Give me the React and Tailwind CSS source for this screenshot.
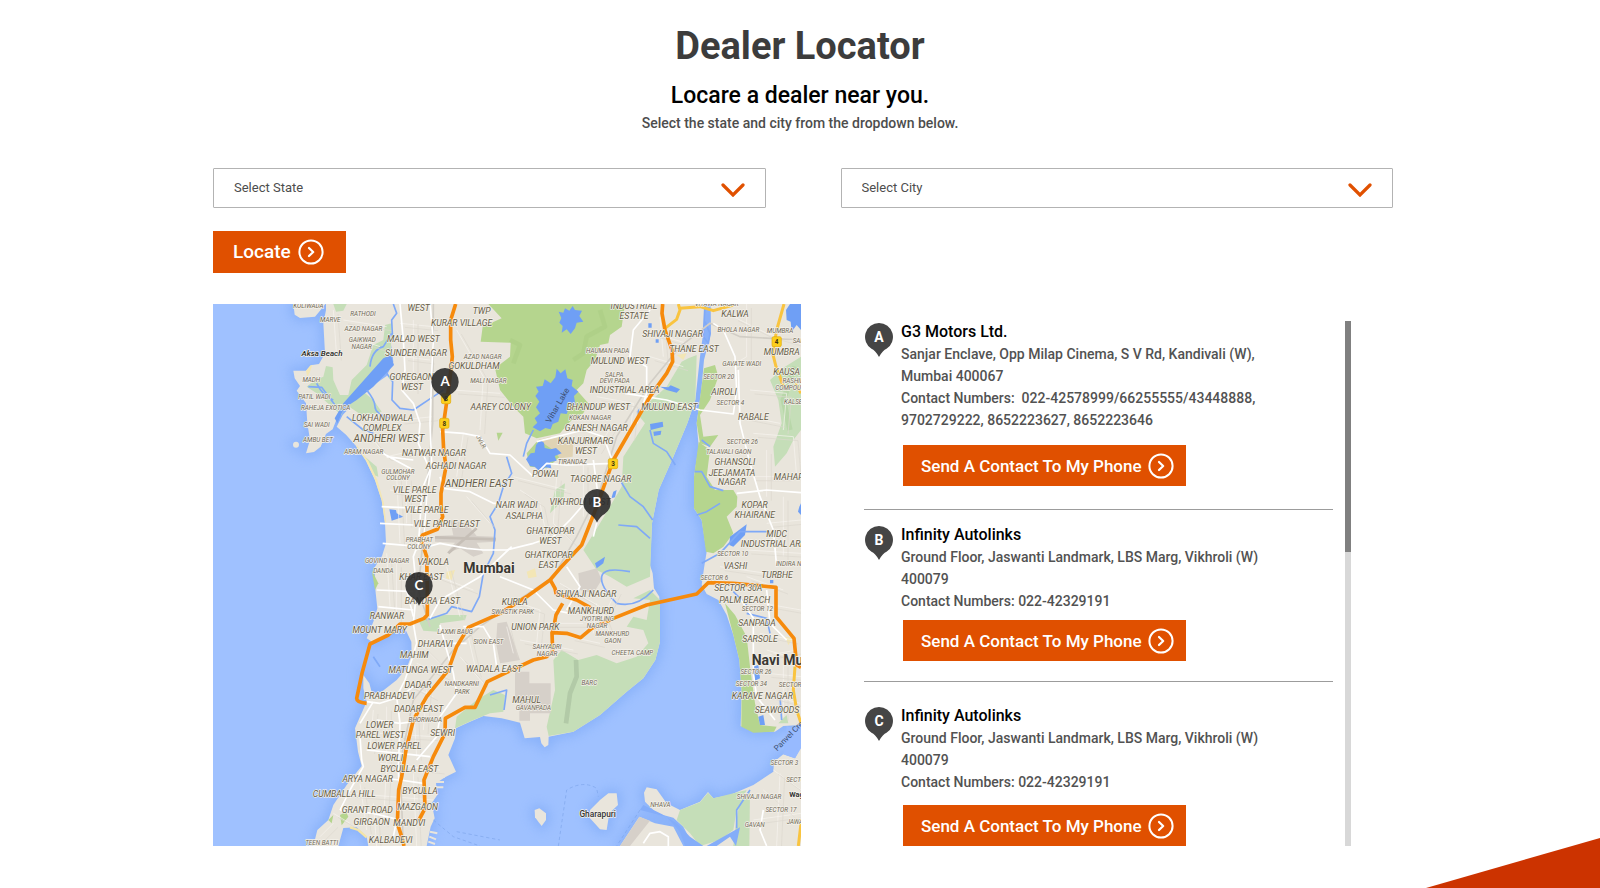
import React from "react";

const dealers = [
  {
    id: "A",
    name: "G3 Motors Ltd.",
    lines: [
      "Sanjar Enclave, Opp Milap Cinema, S V Rd, Kandivali (W),",
      "Mumbai 400067",
      "Contact Numbers:\u00a0 022-42578999/66255555/43448888,",
      "9702729222, 8652223627, 8652223646",
    ],
    item: "pb-[23px]",
    action: "mt-3.5",
  },
  {
    id: "B",
    name: "Infinity Autolinks",
    lines: [
      "Ground Floor, Jaswanti Landmark, LBS Marg, Vikhroli (W)",
      "400079",
      "Contact Numbers: 022-42329191",
    ],
    item: "border-t border-[#9c9c9c] pt-3.5 pb-5",
    action: "mt-2",
  },
  {
    id: "C",
    name: "Infinity Autolinks",
    lines: [
      "Ground Floor, Jaswanti Landmark, LBS Marg, Vikhroli (W)",
      "400079",
      "Contact Numbers: 022-42329191",
    ],
    item: "border-t border-[#9c9c9c] pt-[23px]",
    action: "mt-3",
  },
];

function CircleArrow() {
  return (
    <svg viewBox="0 0 26 26" className="size-[26px] shrink-0" fill="none" stroke="currentColor" aria-hidden="true">
      <circle cx="13" cy="13" r="11.6" strokeWidth="2" />
      <path d="M11 9l4.2 4L11 17" strokeWidth="2.2" strokeLinecap="round" strokeLinejoin="round" />
    </svg>
  );
}

function Pin({ letter }) {
  return (
    <svg viewBox="0 0 28 34" className="h-[34px] w-7 shrink-0" aria-hidden="true">
      <path d="M14 0a14 14 0 0 1 7.5 25.8Q18 27 14 34Q10 27 6.500 25.8A14 14 0 0 1 14 0z" fill="#454545" />
      <text x="14" y="19" textAnchor="middle" className="fill-white font-bold text-[14px]">{letter}</text>
    </svg>
  );
}

function Picker({ id, label }) {
  return (
    <div className="grid items-center">
      <label htmlFor={id} className="sr-only">{label}</label>
      <select
        id={id}
        className="col-start-1 row-start-1 h-10 w-full appearance-none rounded-[1px] border border-[#b3b3b3] bg-white pl-5 pr-14 text-[13px] text-[#4d4d4d]"
      >
        <option>{label}</option>
      </select>
      <svg viewBox="0 0 24 14" className="pointer-events-none col-start-1 row-start-1 mr-[21px] mt-1 h-3.5 w-6 justify-self-end" fill="none" aria-hidden="true">
        <path d="M2 2l10 10L22 2" stroke="#e05000" strokeWidth="3.2" strokeLinecap="round" />
      </svg>
    </div>
  );
}

/* Labels: [text, centre x, baseline y, size]; one block per map quadrant. */
const labelBlocks = [
  {
    dx: 0, dy: 0,
    items: [
      ["KOLIWADA", 325, 53, "s"], ["WEST", 656, 62, "m"], ["TWP", 845, 71, "m"], ["RATHODI", 489, 78, "s"],
      ["MARVE", 391, 97, "s"], ["KURAR VILLAGE", 785, 107, "m"], ["AZAD NAGAR", 490, 124, "s"],
      ["GAIKWAD", 487, 155, "s"], ["NAGAR", 485, 176, "s"], ["MALAD WEST", 640, 157, "m"],
      ["SUNDER NAGAR", 648, 198, "m"], ["AZAD NAGAR", 848, 206, "s"], ["GOKULDHAM", 822, 236, "m"],
      ["GOREGAON", 635, 270, "m"], ["WEST", 636, 299, "m"], ["MADH", 334, 276, "s"], ["MALI NAGAR", 865, 278, "s"],
      ["PATIL WADI", 343, 328, "s"], ["RAHEJA EXOTICA", 377, 361, "s"], ["AAREY COLONY", 902, 361, "m"],
      ["LOKHANDWALA", 548, 392, "m"], ["COMPLEX", 547, 422, "m"], ["SAI WADI", 350, 411, "s"],
      ["ANDHERI WEST", 567, 456, "l"], ["AMBU BET", 354, 457, "s"], ["ARAM NAGAR", 491, 493, "s"],
      ["NATWAR NAGAR", 702, 497, "m"], ["AGHADI NAGAR", 768, 537, "m"], ["GULMOHAR", 594, 551, "s"],
      ["COLONY", 594, 571, "s"], ["ANDHERI EAST", 837, 590, "l"], ["VILE PARLE", 644, 608, "m"], ["WEST", 646, 636, "m"],
      ["VILE PARLE", 680, 668, "m"], ["VILE PARLE EAST", 740, 712, "m"], ["PRABHAT", 658, 757, "s"],
      ["COLONY", 657, 777, "s"], ["GOVIND NAGAR", 561, 818, "s"], ["VAKOLA", 700, 824, "m"],
    ],
  },
  {
    dx: 900, dy: 0,
    items: [
      ["INDUSTRIAL", 402, 57, "m"], ["ESTATE", 402, 86, "m"], ["VITAWA NAGAR", 650, 47, "s"], ["KALWA", 705, 82, "m"],
      ["BHOLA NAGAR", 715, 126, "s"], ["MUMBRA", 840, 130, "s"], ["SHIVAJI NAGAR", 518, 142, "m"],
      ["SAI", 892, 159, "s"], ["HAUMAN PADA", 323, 189, "s"], ["THANE EAST", 582, 186, "m"], ["MUMBRA", 845, 195, "m"],
      ["MULUND WEST", 360, 222, "m"], ["GAVATE WADI", 725, 228, "s"], ["KAUSA", 860, 254, "m"],
      ["SALPA", 343, 260, "s"], ["DEVI PADA", 344, 279, "s"], ["SECTOR 20", 656, 266, "s"], ["RASHID", 880, 278, "s"],
      ["COMPOUND", 877, 299, "s"], ["INDUSTRIAL AREA", 374, 309, "m"], ["AIROLI", 672, 316, "m"],
      ["SECTOR 4", 691, 345, "s"], ["KALSEKAR", 897, 341, "s"], ["BHANDUP WEST", 295, 361, "m"],
      ["MULUND EAST", 508, 361, "m"], ["KOKAN NAGAR", 270, 389, "s"], ["RABALE", 760, 391, "m"],
      ["GANESH NAGAR", 289, 424, "m"], ["KANJURMARG", 257, 463, "m"], ["WEST", 258, 493, "m"],
      ["SECTOR 26", 727, 462, "s"], ["TALAVALI GAON", 686, 491, "s"], ["TIRANDAZ", 217, 522, "s"],
      ["GHANSOLI", 705, 526, "m"], ["POWAI", 136, 561, "m"], ["JEEJAMATA", 696, 558, "m"], ["NAGAR", 696, 586, "m"],
      ["TAGORE NAGAR", 302, 576, "m"], ["MAHAPE", 873, 570, "m"], ["VIKHROLI WEST", 240, 645, "m"],
      ["NAIR WADI", 50, 655, "m"], ["ASALPHA", 73, 687, "m"], ["KOPAR", 764, 655, "m"], ["KHAIRANE", 764, 685, "m"],
      ["GHATKOPAR", 151, 732, "m"], ["WEST", 151, 762, "m"], ["MIDC", 830, 741, "m"], ["INDUSTRIAL AREA", 827, 770, "m"],
      ["SECTOR 10", 698, 798, "s"], ["GHATKOPAR", 146, 805, "m"], ["EAST", 146, 834, "m"], ["VASHI", 706, 836, "m"],
      ["INDIRA NAGAR", 890, 828, "s"],
    ],
  },
  {
    dx: 0, dy: 825,
    items: [
      ["DANDA", 550, 24, "s"], ["KHAR EAST", 664, 45, "m"], ["BANDRA EAST", 697, 118, "m"], ["RANWAR", 561, 161, "m"],
      ["MOUNT MARY", 539, 205, "m"], ["LAXMI BAUG", 765, 208, "s"], ["SION EAST", 865, 238, "s"], ["DHARAVI", 706, 246, "m"],
      ["MAHIM", 643, 280, "m"], ["MATUNGA WEST", 662, 324, "m"], ["WADALA EAST", 882, 320, "m"], ["DADAR", 654, 368, "m"],
      ["NANDKARNI", 785, 364, "s"], ["PARK", 786, 386, "s"], ["PRABHADEVI", 568, 403, "m"], ["DADAR EAST", 656, 441, "m"],
      ["BHORWADA", 676, 471, "s"], ["LOWER", 539, 488, "m"], ["PAREL WEST", 541, 518, "m"], ["SEWRI", 728, 514, "m"],
      ["LOWER PAREL", 583, 551, "m"], ["WORLI", 571, 587, "m"], ["BYCULLA EAST", 628, 620, "m"], ["ARYA NAGAR", 503, 651, "m"],
      ["BYCULLA", 660, 687, "m"], ["CUMBALLA HILL", 433, 695, "m"], ["MAZGAON", 653, 735, "m"], ["GRANT ROAD", 502, 743, "m"],
      ["GIRGAON", 515, 780, "m"], ["MANDVI", 628, 784, "m"], ["KALBADEVI", 572, 834, "m"], ["TEEN BATTI", 365, 841, "s"],
    ],
  },
  {
    dx: 900, dy: 825,
    items: [
      ["KURLA", 44, 120, "m"], ["SWASTIK PARK", 38, 148, "s"], ["SHIVAJI NAGAR", 258, 97, "m"], ["MANKHURD", 273, 147, "m"],
      ["JYOTIRLING", 291, 169, "s"], ["NAGAR", 291, 190, "s"], ["UNION PARK", 106, 195, "m"], ["MANKHURD", 337, 213, "s"],
      ["GAON", 338, 234, "s"], ["SAHYADRI", 141, 252, "s"], ["NAGAR", 141, 273, "s"], ["CHEETA CAMP", 397, 271, "s"],
      ["BARC", 268, 361, "s"], ["MAHUL", 80, 413, "m"], ["GAVANPADA", 100, 436, "s"], ["SECTOR 6", 643, 46, "s"],
      ["TURBHE", 831, 38, "m"], ["SECTOR 30A", 715, 78, "m"], ["PALM BEACH", 734, 113, "m"], ["SECTOR 12", 772, 138, "s"],
      ["SANPADA", 771, 184, "m"], ["SARSOLE", 780, 232, "m"], ["SECTOR 26", 768, 328, "s"], ["SECTOR 34", 754, 363, "s"],
      ["SECTOR 21", 883, 367, "s"], ["KARAVE NAGAR", 787, 403, "m"], ["SEAWOODS", 831, 444, "m"], ["SECTOR 3", 853, 600, "s"],
      ["SECTOR 9", 900, 650, "s"], ["NHAVA", 481, 726, "s"], ["SHIVAJI NAGAR", 777, 702, "s"], ["SECTOR 17", 843, 740, "s"],
      ["GAVAN", 764, 786, "s"], ["JAWALE", 895, 777, "s"],
    ],
  },
];

const labelSize = {
  s: "text-[19px] fill-[#6f6755]",
  m: "text-[26px] fill-[#655c48]",
  l: "text-[31px] fill-[#655c48]",
};

const land = [
  // Madh and Marve
  "M280 42L284 74L300 84L345 80L360 62L376 42H590L575 90L578 150L570 195L520 235L480 290L435 340L415 375L398 418L378 432L362 470L342 486L318 490L330 450L322 400L318 340L290 302L300 288L284 265L280 242L318 242L332 226L357 222L375 190L370 100L378 60V42z",
  // Mumbai
  "M560 42H1515L1512 110L1500 200L1486 330L1462 400L1420 500L1376 600L1356 700L1350 826L1358 850L1362 895L1378 920L1380 1055L1366 1110L1330 1165L1280 1205L1200 1275L1120 1325L1046 1340L1045 1365L1034 1372L1024 1360L1020 1341L974 1345L960 1298L905 1285L850 1278L800 1300L768 1315L765 1345L745 1395L768 1445L735 1462L708 1480L712 1515L695 1540L704 1585L692 1610L680 1668H505L500 1640L470 1612L430 1614L415 1668H340L352 1620L385 1590L400 1545L440 1485L485 1428L474 1385L465 1315L478 1285L500 1235L490 1195V1155L508 1180L516 1210L545 1205L590 1170L620 1135L635 1095L634 1055L618 1022L600 1015L565 1035L520 1058L500 1045L520 995L532 955L524 880L525 830L546 798L558 760L555 700L545 630L525 570L498 512L470 470L438 434L410 410L428 375L500 300L560 258L580 215z",
  // Navi Mumbai
  "M1532 42H1803V1305L1750 1308L1725 1325L1660 1325L1622 1308L1625 1205L1618 1110L1600 1035L1580 975L1555 930L1520 912L1505 885L1512 835L1520 785L1505 690L1482 655L1482 560L1496 470L1490 400L1504 300L1512 210L1533 130z",
  // Uran
  "M1803 1370L1785 1405L1750 1393L1722 1415L1720 1445L1660 1485L1590 1515L1540 1525L1524 1506L1500 1535L1440 1560L1400 1540L1370 1498L1340 1492L1332 1508L1335 1535L1370 1570L1420 1583L1450 1610L1480 1668H1803z",
  "M1260 1668L1318 1580L1365 1600L1420 1610L1450 1668z",
  // Gharapuri and islets
  "M1170 1560L1200 1530L1225 1510L1250 1510L1254 1545L1228 1570L1220 1620L1200 1618L1170 1585z",
  "M1004 1560L1018 1555L1038 1570V1590L1025 1608L1015 1595L1005 1582z",
  "M279 464a9 9 0 1 1 18 0a9 9 0 1 1 -18 0z",
];

const mangrove = [
  "M555 105L575 100L572 195L510 250L485 290L435 335L425 375L395 350L350 310L320 290L345 270L370 260L378 228L398 232L400 270L420 315L445 315L455 270L500 225L520 165L550 150z",
  "M490 305L520 330L545 365L520 372L480 372L440 345z",
  "M400 42H440L430 62L408 65z",
  "M1490 195L1486 330L1462 400L1420 500L1376 600L1356 700L1350 860L1280 890L1230 860L1190 840L1150 780L1200 700L1265 590L1270 500L1335 400L1310 370L1400 290L1430 240L1445 215L1465 205z",
  "M1350 900L1380 930V1055L1366 1110L1330 1165L1280 1205L1200 1275L1120 1325L1046 1338L1040 1310L1065 1200L1060 1110L1085 1080L1135 1110L1190 1095L1250 1120L1310 1100L1345 1060L1330 1020L1280 1010L1300 980L1340 990L1350 930L1300 925z",
  "M765 1315L770 1280L830 1230L880 1200L915 1215L910 1265L870 1270L820 1290z",
  "M655 990L730 975L800 975L795 990L720 1000L715 1025L670 1022z",
  "M1440 1560L1500 1537L1524 1508L1540 1525L1640 1500L1610 1560L1600 1620L1560 1650L1500 1668L1470 1630L1430 1590z",
  "M1620 1530L1650 1500L1648 1668H1600L1608 1600z",
  "M1710 270L1755 230L1803 200V420L1780 450L1760 490L1725 530L1720 470L1745 400L1735 330z",
  "M495 500L530 530L535 560L520 555z",
  "M1735 1300L1760 1275L1765 1300z",
  "M1050 670L1065 600L1095 580L1090 630L1070 650z",
];

const park = [
  "M865 42H1275L1265 110L1230 135L1225 160L1200 165L1185 210L1160 240L1150 280L1130 300L1165 340L1150 370L1110 395L1080 430L1010 445L975 430L970 380L940 350L900 300L885 235L930 200L932 158L842 155L848 110L905 85z",
  "M980 490L1015 450L1090 440L1080 500L1040 535L990 530z",
  "M1512 235L1545 225L1555 260L1530 330L1500 375L1510 440L1555 435L1530 470L1500 460L1490 400z",
  "M1496 455L1530 480L1520 560L1545 600L1600 600L1612 620L1610 650L1580 680L1600 730L1570 770L1540 790L1518 785L1505 690L1482 655L1482 560z",
  "M1575 940L1605 975L1640 1040L1650 1130L1665 1240L1680 1305L1730 1310L1722 1325L1660 1328L1624 1310L1625 1205L1618 1110L1600 1035z",
  "M890 428L908 428L895 452z",
  "M385 1590L400 1575L395 1600z",
  "M420 1575L438 1565L445 1580L425 1606z",
  "M515 840L525 900L535 880z",
];

const water = [
  "M572 195L582 225L520 290L470 330L432 355L412 400L404 385L430 340L470 295L510 250L550 205z",
  "M1076 65L1090 68L1095 55L1108 62L1118 48L1125 60L1146 62L1138 78L1150 95L1130 98L1125 115L1112 132L1100 118L1085 128L1088 108L1078 98L1084 84z",
  "M1008 290L1028 288L1034 268L1052 280L1066 262L1070 236L1082 250L1096 238L1102 265L1118 270L1115 288L1135 305L1122 318L1126 345L1108 350L1100 372L1082 370L1075 395L1058 402L1052 418L1036 414L1020 424L998 412L1012 398L1004 385L1020 370L1008 352L1018 335L1006 318L1016 305z",
  "M978 508L992 490L1004 488L1008 465L1020 450L1032 458L1034 474L1052 478L1068 474L1085 490L1064 498L1070 512L1050 516L1054 535L1036 532L1020 545L1004 530L990 528z",
  "M1350 402L1388 395L1390 410L1352 420zM1360 425L1384 422L1382 434L1362 438z",
  "M1380 290L1405 292L1412 286L1440 298L1430 308L1400 300z",
  "M1758 60L1770 42H1803V120L1790 105L1775 125L1772 95L1760 90z",
  "M1590 740L1640 703L1635 735L1600 770L1588 765z",
  "M1798 650L1803 640V675L1794 665z",
  "M568 658L588 660L590 670L610 680L575 692z",
  "M1658 1130L1675 1125L1680 1165L1665 1172zM1675 1280L1690 1275L1695 1305L1680 1305z",
  "M1240 605L1250 600L1245 622L1234 625z",
  "M1185 820L1215 800L1210 820L1190 835z",
  "M1310 365L1318 355L1315 380z",
  "M1345 100H1355V113H1345zM1367 148H1376V158H1367zM1710 870H1720V880H1710z",
];

const creeks = [
  "M580 42L590 70L575 90L578 150",
  "M500 300Q525 330 525 350T570 385",
  "M560 250L578 275L576 330L600 355L640 360L700 320L730 300",
  "M510 230Q515 180 550 170L575 130M350 280Q370 320 400 330",
  "M440 380L490 420L520 430M325 290L365 292L405 345",
  "M1426 525L1400 485L1360 460L1350 420",
  "M1358 690L1330 650L1290 620L1260 570M1350 745L1310 710L1255 705",
  "M1484 545L1505 545L1530 590L1570 602M1490 675L1520 665L1560 640M1505 450L1530 470",
  "M1505 820L1560 790L1620 725L1700 725",
  "M1515 42L1510 140L1525 160L1530 130L1515 95",
  "M1290 845Q1210 830 1205 860T1250 940Q1310 955 1360 900",
  "M680 990L740 970L755 950L815 965L838 920L850 850L880 790L885 720L870 680L895 640L910 590L935 550L920 500",
  "M1640 970L1700 985L1710 1030M1600 905L1640 945M1740 1220L1745 1290",
  "M1000 420L980 460L970 500",
  "M1650 1500L1610 1560V1615",
  "M540 1130L520 1100M870 1215L920 1200L912 1260",
];

const minorRoads = [
  "M600 42L610 150L615 240L605 300L640 340L660 400L655 460L690 540L665 600L660 700L655 760L640 800L650 900L640 1000L650 1060L635 1110L615 1170L590 1220L600 1300L595 1440L600 1540L580 1640",
  "M690 42L700 150L695 250L690 400L695 520L680 620L670 760",
  "M720 425L790 430L840 440L870 490L930 495L1000 560L1040 520L1100 525L1240 520",
  "M720 560L730 595L810 605L880 640L940 640M540 485L640 540M560 500L640 510",
  "M645 780L720 760L800 775L850 780L920 780L1000 760L1060 740L1110 690L1180 610",
  "M620 900L640 980M690 985L720 930L840 860L935 770",
  "M720 1005L740 1080L760 1150L770 1210L720 1280L710 1340L650 1410",
  "M500 1235L540 1240L600 1220L640 1190M480 1300L520 1235M480 1340L485 1410L490 1430L450 1500L420 1560",
  "M1275 310L1400 330L1500 360L1600 372L1610 300L1605 200L1570 120L1540 100",
  "M1615 240L1620 400L1650 520L1680 620L1720 720L1730 830M1610 610L1700 600L1803 608",
  "M1350 60L1300 120L1290 200L1340 230L1340 310L1310 400",
  "M1010 455L1150 420L1210 440L1240 520M1180 510L1200 660L1180 740",
  "M1100 830L1140 890L1100 960M900 860L1000 900L1060 960L1110 970",
  "M1620 925L1660 985L1660 1150L1670 1220L1725 1290M1700 900L1710 1000L1760 1050",
  "M790 1010L850 1010L880 1060L890 1130M740 1060L800 1060",
  "M1330 1660L1350 1630L1380 1625L1405 1640V1668M1690 1560L1680 1620L1700 1668",
  "M540 700L640 705M545 650L660 655M548 760L660 770M530 900L640 905M535 950L640 960",
  "M530 1290L600 1300L680 1290M500 1380L600 1390L690 1400M500 1460L600 1470L670 1480M420 1560L520 1570L640 1600",
];

const streets = [
  "M430 90L560 110M450 140L540 170M400 60L410 200M600 100L700 110M610 200L690 210M640 90V300M770 120L850 260L840 420M760 300L900 310M790 430L770 560M700 380L600 390M480 400L560 500L650 480M590 560L600 760M570 600L650 610M620 560V700M800 620L870 700M560 790L570 950M590 820V990M690 850L820 900M740 830L780 980",
  "M960 600L1020 640L1040 740M1070 560L1060 700L1120 760M940 560L1100 600M1150 520V680M1330 120L1460 160M1350 200L1450 230M1190 320L1300 340L1290 440M1240 400L1190 480M1380 80L1390 200M1600 80L1700 130L1803 160M1640 42V200L1590 230M1650 300L1760 310L1750 420M1640 380L1740 400M1660 430L1780 440L1790 560M1650 560L1760 560M1700 480V620M1640 780L1803 790M1700 700L1803 690M1750 620V800",
  "M930 930L1020 960L1010 1060M950 1000L1150 1000M1080 880L1200 950L1230 1030M960 1050L1120 1080M1190 940L1180 1030M1250 900L1220 960M1110 1040L1200 1060M1560 830L1700 850M1640 860L1750 900M1690 940L1803 960M1680 1030L1780 1050M1700 1080L1803 1110M1700 1150L1803 1160M1690 1210L1800 1240M1750 1120V1280M1680 1100L1790 1080M1720 1440L1803 1500M1690 1500L1803 1600M1660 1590L1803 1570M1740 1450L1730 1668",
  "M660 1060L720 1120M650 1120L740 1160M620 1180L700 1220M560 1250V1420M520 1260L510 1380M640 1240L650 1400M680 1200L670 1320M540 1330L700 1340M540 1420L720 1440M560 1430L550 1600M450 1510L700 1530M480 1480L500 1620M640 1450L650 1668M520 1540L530 1668M400 1570L450 1600M360 1640L400 1600M780 1100L850 1180M800 1020L830 1150M920 1010L940 1090",
];

const highways = [
  "M767 42L752 90V150L757 200L748 280L738 350L728 420L731 480L738 530L723 610V650L728 680L712 718L668 735L662 745L680 800L682 900V975L672 985L630 1002H600L565 1035L510 1062L486 1150L470 1225Q470 1238 500 1240",
  "M1388 42L1386 70L1395 120L1416 180L1418 215L1400 250L1350 320L1240 510L1190 650L1145 765L1080 835L1050 870L980 920L900 970L805 1012L770 1070L745 1140L680 1220L640 1290L618 1380L605 1460L596 1500L592 1600L605 1640L612 1668",
  "M1050 868L1065 895L1068 910L1130 930L1175 955",
  "M656 1592L675 1555L672 1470L700 1400L735 1330L736 1285L795 1252H825L862 1175L925 1145L1000 1110L1040 1100L1058 1085L1056 1028L1100 1030L1142 1043L1175 1015L1240 985L1340 945L1490 912L1525 878L1600 880L1728 892L1728 980L1782 1045L1790 1125L1803 1132",
  "M1058 1030L1068 975L1088 940",
];

const shields = [[738, 326, "8"], [733, 400, "8"], [1239, 521, "3"], [1730, 155, "4"]];
const pins = [["A", 735, 275], ["B", 1191, 638], ["C", 657, 887]];

function MumbaiMap() {
  return (
    <svg viewBox="39 42 1764 1626" preserveAspectRatio="xMidYMid slice" className="block h-full w-full" role="img" aria-label="Map of Mumbai dealers">
      <defs>
        <filter id="shore" x="-10%" y="-10%" width="120%" height="120%">
          <feGaussianBlur stdDeviation="18" />
        </filter>
      </defs>
      <rect x="39" y="42" width="1764" height="1626" fill="#9fc1ff" />
      <g filter="url(#shore)" fill="#84aef8" stroke="#84aef8" strokeWidth="24" opacity="0.8">
        {land.map((d) => <path key={d} d={d} />)}
      </g>
      <g fill="#e9e5dc">{land.map((d) => <path key={d} d={d} />)}</g>
      <g fill="#c5deb8">{mangrove.map((d) => <path key={d} d={d} />)}</g>
      <g fill="#b5d58e">{park.map((d) => <path key={d} d={d} />)}</g>
      <path d="M1200 60L1215 110L1160 140L1150 190L1120 210M930 150L960 165L940 220" fill="none" stroke="#a3c67b" strokeWidth="14" strokeLinejoin="round" opacity="0.3" />
      <path d="M1128 1110L1130 1160L1110 1210L1098 1300" fill="none" stroke="#a5bd9b" strokeWidth="14" opacity="0.6" />
      <path d="M1785 230L1750 330L1770 420" fill="none" stroke="#abcf9a" strokeWidth="16" opacity="0.5" />
      <g fill="#d6d0c9">
        <path d="M705 738L760 736L750 690L800 700L830 738L888 740V755L830 758L850 790L820 800L780 775L740 790L765 758L705 755z" />
        <path d="M1135 850L1190 835L1205 870L1180 910L1140 900z" />
        <path d="M945 1145H988V1180H1052V1270H990V1292H958V1230H945z" />
        <path d="M892 1000L920 995L960 1110L900 1120L888 1060z" />
        <path d="M1318 1580L1350 1592L1290 1668H1260z" />
      </g>
      <path d="M705 742L888 748M745 790L830 715" fill="none" stroke="#c6bfb7" strokeWidth="8" />
      <path d="M1015 450L1050 440L1120 450L1118 500L1080 505L1060 480z" fill="#e0d3b4" />
      <g fill="#f3e6b5">
        <path d="M740 845L765 840L755 870L738 865zM980 845L1005 835L1010 860L985 865zM1430 195L1460 190L1450 210zM1755 1040L1780 1045L1765 1065z" />
        <path d="M470 468L500 512L527 570L547 632L557 700L550 640L530 570L504 515z" stroke="#f3e6b5" strokeWidth="4" />
        <path d="M318 242L330 228L337 224L330 245L322 262z" />
      </g>
      <g fill="#6f9ff5">{water.map((d) => <path key={d} d={d} />)}</g>
      <g fill="none" stroke="#7fa9f7" strokeWidth="5" strokeLinejoin="round">{creeks.map((d) => <path key={d} d={d} />)}</g>
      <path d="M1760 1308Q1790 1320 1803 1300V1375L1785 1405L1750 1393z" fill="#97baff" />
      <path d="M1320 1560L1400 1580L1440 1625L1455 1668H1510L1470 1640L1430 1600L1385 1572L1330 1545zM1520 1668L1570 1640L1620 1612L1608 1668L1590 1640L1550 1668z" fill="#84adf9" />
      <g fill="none" stroke="#f7f5f0" strokeWidth="2">{streets.map((d) => <path key={d} d={d} />)}</g>
      <g fill="none" stroke="#dcd8cf" strokeWidth="2" transform="translate(14 12)">{streets.map((d) => <path key={d} d={d} />)}</g>
      <g fill="none" stroke="#d2cec6" strokeWidth="5">
        <path d="M700 42L698 400L682 580L668 760L655 900L690 1010M1440 170L1350 280L1250 440L1200 600L1130 740L1060 860L940 940L840 1010L760 1080L640 1230L600 1420L610 1668" />
        <path d="M1803 150L1620 140L1530 100L1440 170" />
      </g>
      <g fill="none" stroke="#ffffff" strokeWidth="5" strokeLinejoin="round">{minorRoads.map((d) => <path key={d} d={d} />)}</g>
      <g fill="none" stroke="#f9c440" strokeWidth="9" strokeLinejoin="round">
        <path d="M1395 115L1430 88L1440 60L1435 42M1440 55L1500 50L1540 62L1600 45M1752 42L1730 120L1718 190L1728 230L1740 260L1750 290" />
        <path d="M1785 1130L1780 1200L1790 1260L1803 1300M1803 1600L1795 1668M1787 280L1803 310" />
      </g>
      <path d="M450 1612L475 1620L500 1642" fill="none" stroke="#f4e5a8" strokeWidth="7" />
      <g fill="none" stroke="#f68a0c" strokeWidth="11" strokeLinejoin="round">{highways.map((d) => <path key={d} d={d} />)}</g>
      <g fill="none" stroke="#7da4ea" strokeWidth="2" strokeDasharray="10 8">
        <path d="M1075 1668L1085 1600L1100 1500Q1150 1470 1190 1495L1195 1520M700 1590L760 1640L840 1668M1320 1560L1250 1668M770 1625L900 1650" />
      </g>
      <path d="M702 1460H735M702 1476H732M700 1492H730M690 1625L712 1630M688 1640L708 1648M685 1655L705 1662" stroke="#e9e5dc" strokeWidth="6" />
      {shields.map(([x, y, n]) => (
        <g key={`${x}-${y}`}>
          <rect x={x - 14} y={y - 15} width="28" height="30" rx="5" fill="#fccf1c" stroke="#e0a90c" strokeWidth="2" />
          <text x={x} y={y + 7} textAnchor="middle" className="fill-[#3b3310] text-[19px] font-bold">{n}</text>
        </g>
      ))}
      <g textAnchor="middle" className="italic" stroke="#f4f1ea" strokeWidth="4" strokeLinejoin="round" paintOrder="stroke">
        {labelBlocks.map((b) => (
          <g key={`${b.dx}-${b.dy}`} transform={`translate(${b.dx} ${b.dy})`}>
            {b.items.map(([t, x, y, s]) => (
              <text key={`${t}-${x}-${y}`} x={x} y={y} className={labelSize[s]}>{t}</text>
            ))}
          </g>
        ))}
        <text x="366" y="199" className="fill-[#1f1f1f] text-[24px] font-medium">Aksa Beach</text>
      </g>
      <g textAnchor="middle" stroke="#f4f1ea" strokeWidth="4" strokeLinejoin="round" paintOrder="stroke">
        <text x="867" y="848" className="fill-[#3a3833] text-[42px] font-bold">Mumbai</text>
        <text x="1655" y="1124" textAnchor="start" className="fill-[#3a3833] text-[42px] font-bold">Navi Mumbai</text>
        <text x="1193" y="1581" className="fill-[#333333] text-[25px] font-medium">Gharapuri</text>
        <text x="1768" y="1520" textAnchor="start" className="fill-[#333333] text-[22px] font-bold">Waghivali</text>
      </g>
      <g className="fill-[#3d4f72] text-[25px]" textAnchor="middle">
        <text transform="translate(1080 350) rotate(-60)">Vihar Lake</text>
        <text transform="translate(1780 1335) rotate(-46)" className="text-[24px]">Panvel Creek</text>
        <text transform="translate(838 458) rotate(62)" className="fill-[#77715f] text-[18px]">JVLR</text>
      </g>
      {pins.map(([n, x, y]) => (
        <g key={n} transform={`translate(${x} ${y})`}>
          <path d="M0 -41A41 41 0 0 1 23 34Q10 40 0 60Q-10 40 -23 34A41 41 0 0 1 0 -41z" fill="#2b2b2b" fillOpacity="0.9" />
          <text y="14" textAnchor="middle" className="fill-white font-['Lato',sans-serif] text-[40px] font-bold">{n}</text>
        </g>
      ))}
    </svg>
  );
}

export default function App() {
  return (
    <div className="relative min-h-screen overflow-hidden bg-white font-['Roboto',sans-serif]">
      <header className="flex flex-col items-center pt-5 text-center">
        <h1 className="text-[38px] font-bold leading-[52px] text-[#3c3c3c]">Dealer Locator</h1>
        <h2 className="mt-2 text-[23px] font-medium leading-8 text-black">Locare a dealer near you.</h2>
        <p className="text-[14px] font-medium leading-[22px] text-[#4d4d4d]">Select the state and city from the dropdown below.</p>
      </header>

      <main className="pl-1.5">
        <div className="mx-auto max-w-[1180px]">
          <form className="mt-[34px]" onSubmit={(e) => e.preventDefault()}>
            <div className="grid grid-cols-2 gap-[75px]">
              <Picker id="state" label="Select State" />
              <Picker id="city" label="Select City" />
            </div>
            <button type="submit" className="mt-[23px] flex h-[42px] items-center gap-[7px] bg-[#e05000] pl-5 pr-[22px] text-[19px] font-medium text-white">
              Locate
              <CircleArrow />
            </button>
          </form>

          <div className="mt-[31px] grid grid-cols-[588fr_487fr] gap-[63px] pr-[42px]">
            <div className="h-[542px] overflow-hidden">
              <MumbaiMap />
            </div>
            <div className="flex gap-3 pt-[17px]">
              <ul className="flex-1">
                {dealers.map((d) => (
                  <li key={d.id} className={`flex gap-2 ${d.item}`}>
                    <div className="pl-px pt-0.5">
                      <Pin letter={d.id} />
                    </div>
                    <div className="text-[14px] font-medium leading-[22px] text-[#525252]">
                      <h3 className="text-[16px] text-black">{d.name}</h3>
                      {d.lines.map((l) => <p key={l}>{l}</p>)}
                      <button type="button" className={`ml-0.5 flex h-[41px] w-[283px] items-center justify-between bg-[#e05000] pl-[18px] pr-3 text-[17px] font-medium text-white ${d.action}`}>
                        Send A Contact To My Phone
                        <CircleArrow />
                      </button>
                    </div>
                  </li>
                ))}
              </ul>
              <div className="w-1.5 bg-[#d8d8d8]">
                <div className="h-[44%] bg-[#808080]" />
              </div>
            </div>
          </div>
        </div>
      </main>

      <svg viewBox="0 0 174 50" className="absolute bottom-0 right-0 h-[50px] w-[174px]" aria-hidden="true">
        <path d="M0 50L174 0V50z" fill="#cc3300" />
      </svg>
    </div>
  );
}
